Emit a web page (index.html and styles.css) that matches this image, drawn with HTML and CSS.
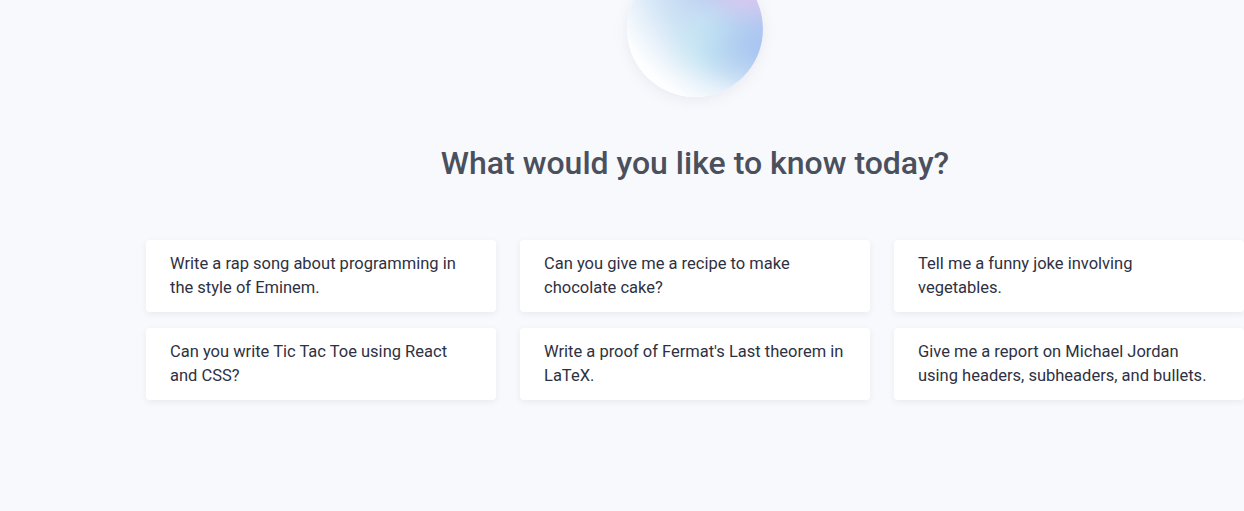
FILE: index.html
```html
<!DOCTYPE html>
<html lang="en">
<head>
<meta charset="utf-8">
<title>What would you like to know today?</title>
<link rel="stylesheet" href="styles.css">
</head>
<body>
<div class="app">
  <aside class="sidebar"></aside>
  <main class="main">
    <div class="orb"></div>
    <h1 class="title">What would you like to know today?</h1>
    <div class="prompts">
      <button class="card">Write a rap song about programming in the style of Eminem.</button>
      <button class="card">Can you give me a recipe to make chocolate cake?</button>
      <button class="card">Tell me a funny joke involving vegetables.</button>
      <button class="card">Can you write Tic Tac Toe using React and CSS?</button>
      <button class="card">Write a proof of Fermat's Last theorem in LaTeX.</button>
      <button class="card">Give me a report on Michael Jordan using headers, subheaders, and bullets.</button>
    </div>
  </main>
</div>
</body>
</html>
```
FILE: styles.css
```css
html, body {
  margin: 0;
  padding: 0;
  height: 100%;
  background: #f8f9fc;
  font-family: Roboto, "Liberation Sans", sans-serif;
  overflow: hidden;
}
.app {
  display: flex;
  min-height: 100%;
}
.sidebar {
  flex: 0 0 146px;
}
.main {
  flex: 0 0 1098px;
  display: flex;
  flex-direction: column;
  align-items: center;
}
.orb {
  position: relative;
  width: 136px;
  height: 136px;
  margin-top: -39px;
  border-radius: 50%;
  overflow: hidden;
  background: #ffffff;
  box-shadow: 0 3px 14px rgba(140, 150, 185, 0.14);
}
.orb::before {
  content: "";
  position: absolute;
  inset: -12px;
  background:
    radial-gradient(ellipse at 84% 12%, rgba(236, 196, 236, 0.95) 0%, rgba(236, 196, 236, 0) 30%),
    radial-gradient(ellipse at 92% 62%, rgba(164, 194, 240, 0.95) 0%, rgba(164, 194, 240, 0) 34%),
    radial-gradient(ellipse at 62% 58%, rgba(196, 234, 242, 0.9) 0%, rgba(196, 234, 242, 0) 36%),
    radial-gradient(circle at 100% 0%, #d2c8f0 0%, #bccdf2 35%, #cfe3f5 55%, #ffffff 78%);
  filter: blur(6px);
}
.title {
  margin: 48px 0 0;
  font-size: 32px;
  line-height: 36px;
  font-weight: 500;
  color: #4a505e;
}
.prompts {
  margin-top: 59px;
  width: 100%;
  display: grid;
  grid-template-columns: repeat(3, 350px);
  column-gap: 24px;
  row-gap: 16px;
}
.card {
  box-sizing: border-box;
  height: 72px;
  padding: 12px 25px 12px 24px;
  border: 0;
  border-radius: 4px;
  background: #ffffff;
  box-shadow: 0 2px 6px rgba(60, 70, 110, 0.08);
  font-family: inherit;
  font-size: 16.5px;
  line-height: 24px;
  color: #2e3142;
  text-align: left;
  cursor: pointer;
  display: flex;
  align-items: flex-start;
}
```
